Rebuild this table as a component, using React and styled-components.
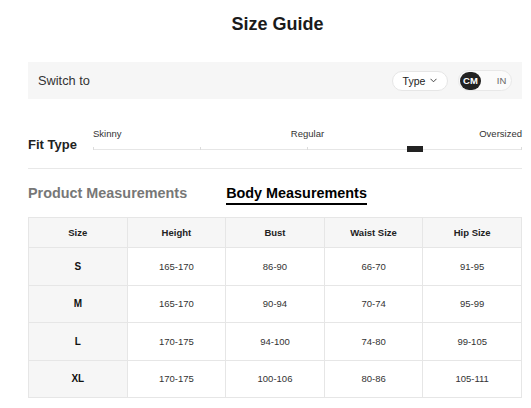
import React from "react";
import styled, { createGlobalStyle } from "styled-components";

const Global = createGlobalStyle`
  html, body { margin: 0; padding: 0; background: #fff; }
  body { font-family: "Liberation Sans", Arial, sans-serif; color: #222; }
  * { box-sizing: border-box; }
`;

const Page = styled.div`
  width: 531px;
  padding: 0 9px 0 28px;
`;

const Title = styled.h1`
  margin: 0;
  height: 62px;
  padding-top: 14px;
  font-size: 18px;
  line-height: 21px;
  font-weight: 700;
  text-align: center;
  color: #1a1a1a;
  padding-left: 5px;
`;

const Bar = styled.div`
  height: 37px;
  background: #f6f6f6;
  display: flex;
  align-items: center;
  padding: 0 10px;
`;

const BarLabel = styled.span`
  flex: 1;
  font-size: 12.8px;
  color: #333;
`;

const TypePill = styled.div`
  width: 56px;
  height: 20px;
  border: 1px solid #e6e6e6;
  border-radius: 10px;
  background: #fff;
  display: flex;
  align-items: center;
  justify-content: center;
  gap: 5px;
  font-size: 10.5px;
  color: #222;
`;

const Toggle = styled.div`
  margin-left: 10px;
  width: 54px;
  height: 21px;
  border: 1px solid #e8e8e8;
  border-radius: 11px;
  background: #fbfbfb;
  display: flex;
  align-items: center;
  padding: 0 1px;
`;

const Unit = styled.span`
  height: 18px;
  min-width: 21px;
  border-radius: 9px;
  display: flex;
  align-items: center;
  justify-content: center;
  font-size: 9.5px;
  font-weight: ${(p) => (p.$active ? 700 : 400)};
  background: ${(p) => (p.$active ? "#222" : "transparent")};
  color: ${(p) => (p.$active ? "#fff" : "#666")};
  margin-left: ${(p) => (p.$active ? "0" : "10px")};
`;

const FitRow = styled.div`
  margin-top: 26px;
  height: 44px;
  border-bottom: 1px solid #e8e8e8;
  display: flex;
`;

const FitLabel = styled.div`
  width: 65px;
  padding-top: 12px;
  font-size: 13px;
  line-height: 15px;
  font-weight: 700;
  color: #222;
`;

const Slider = styled.div`
  flex: 1;
  padding-top: 3px;
`;

const SliderLabels = styled.div`
  display: grid;
  grid-template-columns: 1fr auto 1fr;
  font-size: 9.5px;
  line-height: 11px;
  color: #333;
`;

const SliderLabel = styled.span`
  justify-self: ${(p) => p.$align};
`;

const Track = styled.div`
  position: relative;
  margin-top: 7px;
  height: 4px;
  border-bottom: 1px solid #e6e6e6;
  display: flex;
  justify-content: space-between;
`;

const Tick = styled.span`
  width: 1px;
  height: 3px;
  margin-top: 1px;
  background: #dcdcdc;
`;

const Marker = styled.span`
  position: absolute;
  top: 0;
  width: 16px;
  height: 6px;
  margin-left: -8px;
  background: #222;
`;

const Tabs = styled.div`
  margin-top: 16px;
  display: flex;
  gap: 39px;
`;

const Tab = styled.div`
  font-size: 14.4px;
  line-height: 16px;
  font-weight: 700;
  padding-bottom: 2px;
  border-bottom: 2px solid ${(p) => (p.$active ? "#000" : "transparent")};
  color: ${(p) => (p.$active ? "#000" : "#777")};
`;

const Table = styled.table`
  margin-top: 12px;
  width: 494px;
  border-collapse: collapse;
  table-layout: fixed;
`;

const Th = styled.th`
  height: 30px;
  border: 1px solid #e6e6e6;
  background: #f6f6f6;
  font-size: 9.5px;
  font-weight: 700;
  color: #222;
  text-align: center;
  padding: 0;
`;

const Td = styled.td`
  height: 37.5px;
  border: 1px solid #e6e6e6;
  background: ${(p) => (p.$head ? "#f6f6f6" : "#fff")};
  font-size: ${(p) => (p.$head ? "10px" : "9.5px")};
  font-weight: ${(p) => (p.$head ? 700 : 400)};
  color: ${(p) => (p.$head ? "#111" : "#333")};
  text-align: center;
  padding: 0;
`;

const Chevron = () => (
  <svg width="7" height="5" viewBox="0 0 7 5" fill="none">
    <path d="M0.5 0.8L3.5 3.8L6.5 0.8" stroke="#333" strokeWidth="0.9" />
  </svg>
);

const headers = ["Size", "Height", "Bust", "Waist Size", "Hip Size"];
const rows = [
  ["S", "165-170", "86-90", "66-70", "91-95"],
  ["M", "165-170", "90-94", "70-74", "95-99"],
  ["L", "170-175", "94-100", "74-80", "99-105"],
  ["XL", "170-175", "100-106", "80-86", "105-111"],
];

export default function App() {
  const fitPosition = 0.75;
  return (
    <Page>
      <Global />
      <Title>Size Guide</Title>
      <Bar>
        <BarLabel>Switch to</BarLabel>
        <TypePill>
          Type <Chevron />
        </TypePill>
        <Toggle>
          <Unit $active>CM</Unit>
          <Unit>IN</Unit>
        </Toggle>
      </Bar>
      <FitRow>
        <FitLabel>Fit Type</FitLabel>
        <Slider>
          <SliderLabels>
            <SliderLabel $align="start">Skinny</SliderLabel>
            <SliderLabel $align="center">Regular</SliderLabel>
            <SliderLabel $align="end">Oversized</SliderLabel>
          </SliderLabels>
          <Track>
            <Tick />
            <Tick />
            <Tick />
            <Tick />
            <Tick />
            <Marker style={{ left: `${fitPosition * 100}%` }} />
          </Track>
        </Slider>
      </FitRow>
      <Tabs>
        <Tab>Product Measurements</Tab>
        <Tab $active>Body Measurements</Tab>
      </Tabs>
      <Table>
        <thead>
          <tr>
            {headers.map((h) => (
              <Th key={h}>{h}</Th>
            ))}
          </tr>
        </thead>
        <tbody>
          {rows.map((r) => (
            <tr key={r[0]}>
              {r.map((c, i) => (
                <Td key={i} $head={i === 0}>
                  {c}
                </Td>
              ))}
            </tr>
          ))}
        </tbody>
      </Table>
    </Page>
  );
}
